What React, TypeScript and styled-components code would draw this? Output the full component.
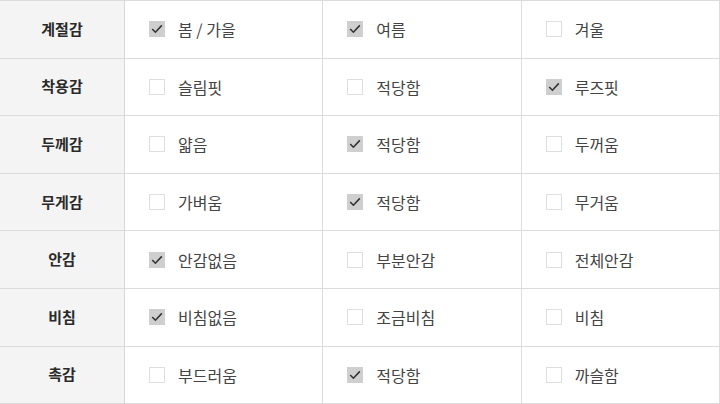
import React from "react";
import styled, { createGlobalStyle } from "styled-components";

interface IOption {
  label: string;
  checked: boolean;
}

interface IRow {
  title: string;
  options: IOption[];
}

const rows: IRow[] = [
  { title: "계절감", options: [{ label: "봄 / 가을", checked: true }, { label: "여름", checked: true }, { label: "겨울", checked: false }] },
  { title: "착용감", options: [{ label: "슬림핏", checked: false }, { label: "적당함", checked: false }, { label: "루즈핏", checked: true }] },
  { title: "두께감", options: [{ label: "얇음", checked: false }, { label: "적당함", checked: true }, { label: "두꺼움", checked: false }] },
  { title: "무게감", options: [{ label: "가벼움", checked: false }, { label: "적당함", checked: true }, { label: "무거움", checked: false }] },
  { title: "안감", options: [{ label: "안감없음", checked: true }, { label: "부분안감", checked: false }, { label: "전체안감", checked: false }] },
  { title: "비침", options: [{ label: "비침없음", checked: true }, { label: "조금비침", checked: false }, { label: "비침", checked: false }] },
  { title: "촉감", options: [{ label: "부드러움", checked: false }, { label: "적당함", checked: true }, { label: "까슬함", checked: false }] },
];

const GlobalStyle = createGlobalStyle`
  html, body {
    margin: 0;
    padding: 0;
    background: #fff;
  }
  body {
    font-family: "Noto Sans CJK KR", "Noto Sans", sans-serif;
  }
`;

const Table = styled.table`
  width: 720px;
  height: 404px;
  border-collapse: collapse;
  table-layout: fixed;
  border-right: 1px solid #dcdcdc;
  border-bottom: 1px solid #dcdcdc;
`;

const Row = styled.tr`
  height: 57.6px;
  border-top: 1px solid #dcdcdc;
`;

const Head = styled.th`
  width: 124px;
  background: #f4f4f4;
  border-right: 1px solid #d6d6d6;
  font-size: 15px;
  font-weight: 700;
  color: #2a2a2a;
  text-align: center;
  padding: 0 0 2px;
`;

const Cell = styled.td`
  border-left: 1px solid #dcdcdc;
  padding: 0 0 0 24px;
`;

const Option = styled.div`
  display: flex;
  align-items: center;
  gap: 13px;
  font-size: 16px;
  color: #444;
`;

const Box = styled.span<{ $checked: boolean }>`
  width: 16px;
  height: 16px;
  box-sizing: border-box;
  display: flex;
  align-items: center;
  justify-content: center;
  background: ${(p) => (p.$checked ? "#cfcfcf" : "#fff")};
  border: 1px solid ${(p) => (p.$checked ? "#cfcfcf" : "#dedede")};
`;

function Check() {
  return (
    <svg width="12" height="10" viewBox="0 0 12 10">
      <path d="M1.2 5 L4.4 8.2 L10.8 1.4" fill="none" stroke="#333" strokeWidth="1.6" />
    </svg>
  );
}

export default function App() {
  return (
    <>
      <GlobalStyle />
      <Table>
        <tbody>
          {rows.map((row) => (
            <Row key={row.title}>
              <Head>{row.title}</Head>
              {row.options.map((opt, i) => (
                <Cell key={i}>
                  <Option>
                    <Box $checked={opt.checked}>{opt.checked && <Check />}</Box>
                    {opt.label}
                  </Option>
                </Cell>
              ))}
            </Row>
          ))}
        </tbody>
      </Table>
    </>
  );
}
